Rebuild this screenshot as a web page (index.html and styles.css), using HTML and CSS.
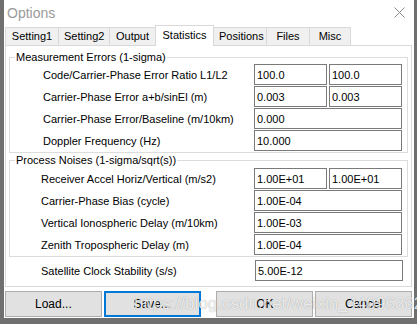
FILE: index.html
```html
<!DOCTYPE html>
<html lang="en">
<head>
    <meta charset="UTF-8">
    <title>Options</title>
    <link rel="stylesheet" href="styles.css">
</head>
<body>
    <div class="window">
        <div class="titlebar">
            <span class="title">Options</span>
            <svg class="close" width="11" height="11" viewBox="0 0 11 11">
                <path d="M0.5 0.5 L10.5 10.5 M10.5 0.5 L0.5 10.5" stroke="#8a8a8a" stroke-width="1" fill="none"/>
            </svg>
        </div>

        <div class="tabs">
            <div class="tab">Setting1</div>
            <div class="tab">Setting2</div>
            <div class="tab">Output</div>
            <div class="tab active">Statistics</div>
            <div class="tab">Positions</div>
            <div class="tab">Files</div>
            <div class="tab">Misc</div>
        </div>

        <div class="panel">
            <fieldset class="group">
                <legend>Measurement Errors (1-sigma)</legend>
                <div class="row">
                    <span class="label">Code/Carrier-Phase Error Ratio L1/L2</span>
                    <div class="fields">
                        <div class="field half">100.0</div>
                        <div class="field half">100.0</div>
                    </div>
                </div>
                <div class="row">
                    <span class="label">Carrier-Phase Error a+b/sinEl (m)</span>
                    <div class="fields">
                        <div class="field half">0.003</div>
                        <div class="field half">0.003</div>
                    </div>
                </div>
                <div class="row">
                    <span class="label">Carrier-Phase Error/Baseline (m/10km)</span>
                    <div class="fields">
                        <div class="field">0.000</div>
                    </div>
                </div>
                <div class="row">
                    <span class="label">Doppler Frequency (Hz)</span>
                    <div class="fields">
                        <div class="field">10.000</div>
                    </div>
                </div>
            </fieldset>

            <fieldset class="group second">
                <legend>Process Noises (1-sigma/sqrt(s))</legend>
                <div class="row">
                    <span class="label">Receiver Accel Horiz/Vertical (m/s2)</span>
                    <div class="fields">
                        <div class="field half">1.00E+01</div>
                        <div class="field half">1.00E+01</div>
                    </div>
                </div>
                <div class="row">
                    <span class="label">Carrier-Phase Bias (cycle)</span>
                    <div class="fields">
                        <div class="field">1.00E-04</div>
                    </div>
                </div>
                <div class="row">
                    <span class="label">Vertical Ionospheric Delay (m/10km)</span>
                    <div class="fields">
                        <div class="field">1.00E-03</div>
                    </div>
                </div>
                <div class="row">
                    <span class="label">Zenith Tropospheric Delay (m)</span>
                    <div class="fields">
                        <div class="field">1.00E-04</div>
                    </div>
                </div>
            </fieldset>

            <div class="row single">
                <span class="label">Satellite Clock Stability (s/s)</span>
                <div class="fields">
                    <div class="field">5.00E-12</div>
                </div>
            </div>
        </div>

        <div class="buttons">
            <div class="btn">Load...</div>
            <div class="btn focus">Save...</div>
            <div class="spacer"></div>
            <div class="btn">OK</div>
            <div class="btn">Cancel</div>
        </div>

        <div class="watermark">https://blog.csdn.net/weixin_44096362</div>
    </div>
</body>
</html>
```

FILE: styles.css
```css
html, body {
    margin: 0;
    padding: 0;
    height: 100%;
    overflow: hidden;
    background-color: #6f6f6f;
}

body {
    font-family: "Liberation Sans", Arial, sans-serif;
    font-size: 11px;
    color: #000;
}

.window {
    position: relative;
    margin-left: 4px;
    width: 410px;
    height: 318px;
    background: #fff;
    display: flex;
    flex-direction: column;
}

.titlebar {
    height: 26px;
    display: flex;
    align-items: center;
    justify-content: space-between;
    padding: 0 9px 0 3px;
}

.title {
    font-size: 14px;
    color: #9a9a9a;
    margin-top: -1px;
}

.close {
    margin-top: -2px;
}

.tabs {
    display: flex;
    align-items: flex-end;
    height: 19px;
    margin-left: 1px;
}

.tab {
    height: 17px;
    line-height: 17px;
    padding: 0 5px;
    background: #f0f0f0;
    border: 1px solid #d9d9d9;
    border-bottom: none;
    margin-right: -1px;
    text-align: center;
}

.tab:nth-child(1) { width: 42px; }
.tab:nth-child(2) { width: 40px; }
.tab:nth-child(3) { width: 35px; }
.tab:nth-child(5) { width: 42px; }
.tab:nth-child(6) { width: 32px; }
.tab:nth-child(7) { width: 30px; }

.tab.active {
    position: relative;
    z-index: 1;
    width: 47px;
    height: 19px;
    line-height: 18px;
    background: #fff;
    margin-bottom: -1px;
    height: 20px;
}

.panel {
    margin: 0 2px 0 1px;
    height: 242px;
    box-sizing: border-box;
    border: 1px solid #d9d9d9;
    padding: 5px 3px 0 3px;
}

.group {
    margin: 0;
    padding: 0 0 0 0;
    border: 1px solid #dcdcdc;
    min-width: 0;
}

.group legend {
    padding: 0 1px;
    margin-left: 5px;
    line-height: 13px;
}

.group.second {
    margin-top: 1px;
}

.group.second .row:first-of-type {
    margin-top: 1px;
}

.row {
    display: flex;
    align-items: center;
    height: 21px;
    margin-bottom: 1px;
}

.label {
    flex: 1;
    padding-left: 33px;
}

.group.second .label,
.single .label {
    padding-left: 31px;
}

.fields {
    display: flex;
    gap: 2px;
    width: 148px;
    margin-right: 5px;
}

.field {
    flex: 1;
    height: 21px;
    line-height: 20px;
    box-sizing: border-box;
    border: 1px solid #7a7a7a;
    padding-left: 2px;
    background: #fff;
}

.single {
    margin-top: 3px;
    margin-left: 1px;
}

.buttons {
    display: flex;
    margin: 4px 2px 0 1px;
    gap: 2px;
}

.spacer {
    width: 12px;
}

.btn {
    width: 97px;
    height: 26px;
    box-sizing: border-box;
    border: 1px solid #adadad;
    background: #e1e1e1;
    font-size: 12px;
    display: flex;
    align-items: center;
    justify-content: center;
}

.btn.focus {
    border: 2px solid #0078d7;
}

.watermark {
    position: absolute;
    left: 130px;
    top: 294px;
    font-size: 17px;
    color: rgba(255, 255, 255, 0.8);
    text-shadow: 0 0 1px rgba(0, 0, 0, 0.35);
    white-space: nowrap;
    pointer-events: none;
}
```
